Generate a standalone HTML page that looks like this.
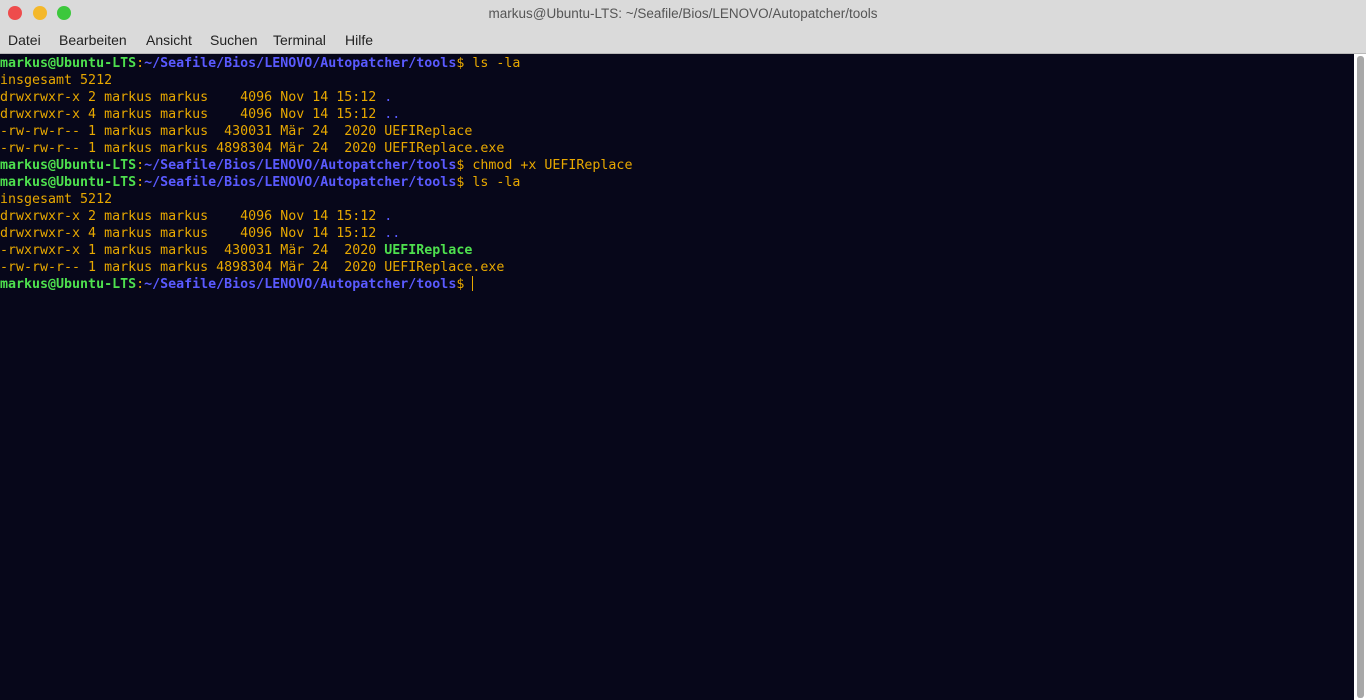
<!DOCTYPE html>
<html><head><meta charset="utf-8"><style>
html,body{margin:0;padding:0;width:1366px;height:700px;overflow:hidden;background:#07071a}
.top{position:absolute;left:0;top:0;width:1366px;height:53px;background:#dadada;border-bottom:1px solid #b8b8b8;font-family:"Liberation Sans","DejaVu Sans",sans-serif}
.dot{position:absolute;top:6px;width:14px;height:14px;border-radius:50%}
.title{position:absolute;top:6px;left:0;width:1366px;text-align:center;font-size:13.5px;color:#555}
.menu{position:absolute;top:32px;font-size:14px;color:#222}
.term{position:absolute;left:0;top:55px;width:1354px;height:645px;background:#07071a;font-family:"DejaVu Sans Mono",monospace;font-size:13.3px;line-height:17px;color:#e8a800}
.term div{height:17px;white-space:pre}
.p{color:#4ee04e;font-weight:bold}.d{color:#5a5aff;font-weight:bold}.g{color:#4ee04e;font-weight:bold}.b{color:#5a5aff}
.sb{position:absolute;left:1354px;top:54px;width:12px;height:646px;background:#fff}
.th{position:absolute;left:3px;top:2px;width:7px;height:642px;background:#a8a8a8;border-radius:3px}
.cur{display:inline-block;width:1px;height:15px;background:#e8a800;vertical-align:-3px}
</style></head><body>
<div class="top">
<div class="dot" style="left:8px;background:#ee4c4c"></div>
<div class="dot" style="left:33px;background:#f4b82a"></div>
<div class="dot" style="left:57px;background:#3cc83c"></div>
<div class="title">markus@Ubuntu-LTS: ~/Seafile/Bios/LENOVO/Autopatcher/tools</div>
<span class="menu" style="left:8px">Datei</span>
<span class="menu" style="left:59px">Bearbeiten</span>
<span class="menu" style="left:146px">Ansicht</span>
<span class="menu" style="left:210px">Suchen</span>
<span class="menu" style="left:273px">Terminal</span>
<span class="menu" style="left:345px">Hilfe</span>
</div>
<div class="term"><div><span class="p">markus@Ubuntu-LTS</span>:<span class="d">~/Seafile/Bios/LENOVO/Autopatcher/tools</span>$ ls -la</div><div>insgesamt 5212</div><div>drwxrwxr-x 2 markus markus    4096 Nov 14 15:12 <span class="b">.</span></div><div>drwxrwxr-x 4 markus markus    4096 Nov 14 15:12 <span class="b">..</span></div><div>-rw-rw-r-- 1 markus markus  430031 Mär 24  2020 UEFIReplace</div><div>-rw-rw-r-- 1 markus markus 4898304 Mär 24  2020 UEFIReplace.exe</div><div><span class="p">markus@Ubuntu-LTS</span>:<span class="d">~/Seafile/Bios/LENOVO/Autopatcher/tools</span>$ chmod +x UEFIReplace</div><div><span class="p">markus@Ubuntu-LTS</span>:<span class="d">~/Seafile/Bios/LENOVO/Autopatcher/tools</span>$ ls -la</div><div>insgesamt 5212</div><div>drwxrwxr-x 2 markus markus    4096 Nov 14 15:12 <span class="b">.</span></div><div>drwxrwxr-x 4 markus markus    4096 Nov 14 15:12 <span class="b">..</span></div><div>-rwxrwxr-x 1 markus markus  430031 Mär 24  2020 <span class="g">UEFIReplace</span></div><div>-rw-rw-r-- 1 markus markus 4898304 Mär 24  2020 UEFIReplace.exe</div><div><span class="p">markus@Ubuntu-LTS</span>:<span class="d">~/Seafile/Bios/LENOVO/Autopatcher/tools</span>$ <span class="cur"></span></div></div>
<div class="sb"><div class="th"></div></div>
</body></html>
